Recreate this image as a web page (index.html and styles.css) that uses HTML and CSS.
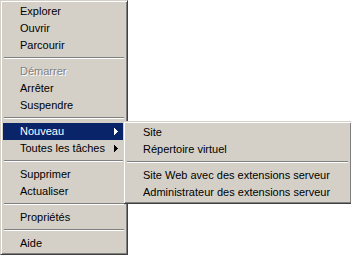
FILE: index.html
```html
<!DOCTYPE html>
<html lang="fr">
<head>
<meta charset="utf-8">
<link rel="stylesheet" href="styles.css">
</head>
<body>
<div class="menu main">
  <div class="item">Explorer</div>
  <div class="item">Ouvrir</div>
  <div class="item">Parcourir</div>
  <div class="sep"></div>
  <div class="item disabled">Démarrer</div>
  <div class="item">Arrêter</div>
  <div class="item">Suspendre</div>
  <div class="sep"></div>
  <div class="item active has-sub"><span>Nouveau</span><svg class="arrow" width="4" height="7" viewBox="0 0 4 7"><path d="M0 0h1v1h1v1h1v1h1v1h-1v1h-1v1h-1v1h-1z"/></svg></div>
  <div class="item has-sub"><span>Toutes les tâches</span><svg class="arrow" width="4" height="7" viewBox="0 0 4 7"><path d="M0 0h1v1h1v1h1v1h1v1h-1v1h-1v1h-1v1h-1z"/></svg></div>
  <div class="sep"></div>
  <div class="item">Supprimer</div>
  <div class="item">Actualiser</div>
  <div class="sep"></div>
  <div class="item">Propriétés</div>
  <div class="sep"></div>
  <div class="item">Aide</div>
  <div class="menu sub">
    <div class="item">Site</div>
    <div class="item">Répertoire virtuel</div>
    <div class="sep"></div>
    <div class="item">Site Web avec des extensions serveur</div>
    <div class="item">Administrateur des extensions serveur</div>
  </div>
</div>
</body>
</html>
```
FILE: styles.css
```css
html, body {
  margin: 0;
  padding: 0;
  background: #fff;
}
.menu {
  background: #d4d0c8;
  border: 1px solid;
  border-color: #d4d0c8 #404040 #404040 #d4d0c8;
  box-shadow: inset 1px 1px #fff, inset -1px -1px #808080;
  padding: 2px;
  box-sizing: border-box;
  font-family: "Liberation Sans", Arial, sans-serif;
  font-size: 11px;
  color: #000;
}
.main {
  position: relative;
  width: 128px;
}
.sub {
  position: absolute;
  left: 122px;
  top: 120px;
  width: 229px;
}
.item {
  height: 17px;
  line-height: 17px;
  padding-left: 17px;
  padding-right: 7px;
  white-space: nowrap;
  display: flex;
  align-items: center;
  justify-content: space-between;
}
.item.active {
  background: #0a246a;
  color: #fff;
}
.arrow {
  fill: #000;
  display: block;
}
.item.active .arrow {
  fill: #fff;
}
.disabled {
  color: #808080;
  text-shadow: 1px 1px #fff;
}
.sep {
  height: 0;
  border-top: 1px solid #808080;
  border-bottom: 1px solid #fff;
  margin: 3px 1px 4px;
}
```
